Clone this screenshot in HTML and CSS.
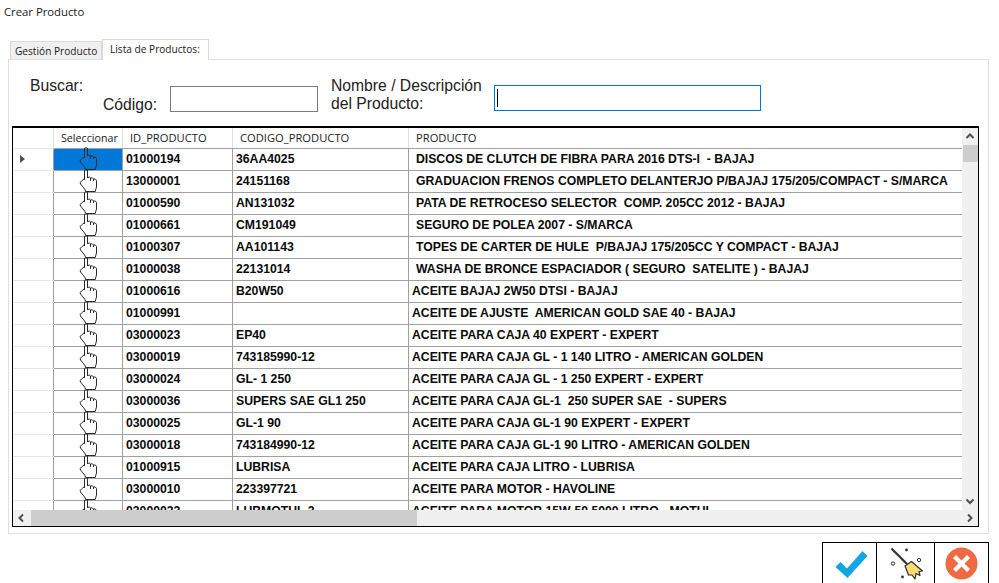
FILE: index.html
```html
<!DOCTYPE html>
<html lang="es">
<head>
<meta charset="utf-8">
<title>Crear Producto</title>
<link rel="stylesheet" href="styles.css">
</head>
<body>
<svg class="defs" width="0" height="0" aria-hidden="true">
  <symbol id="hand" viewBox="0 0 19 24">
    <path d="M5.5 11V1.2Q7 .2 8.5 1.2V9M8.5 8.6Q10.500 7.200 11.500 9V12M11.500 9Q13.500 8 14.500 10V12M14.500 10Q16.500 9.200 17.500 11.500V18Q16.800 20 16.300 22.500H6.800Q6 20 4 18L1.500 15Q.5 13 2.500 12L5.500 9.500" fill="none" stroke="#2b2b2b" stroke-width="1"/>
  </symbol>
</svg>
<div class="window">
  <div class="title">Crear Producto</div>
  <div class="tabs">
    <div class="tab">Gestión Producto</div>
    <div class="tab tab-active">Lista de Productos:</div>
  </div>
  <div class="panel">
    <div class="search">
      <div class="search-code">
        <div class="search-title">Buscar:</div>
        <div class="search-code-label">Código:</div>
      </div>
      <div class="input input-code"></div>
      <div class="search-name-label">Nombre / Descripción<br>del Producto:</div>
      <div class="input input-name"><span class="caret"></span></div>
    </div>
    <div class="grid">
      <div class="grid-main">
        <div class="grid-view">
          <div class="row row-head">
            <div class="c c0"></div><div class="c c1">Seleccionar</div><div class="c c2">ID_PRODUCTO</div><div class="c c3">CODIGO_PRODUCTO</div><div class="c c4 in">PRODUCTO</div>
          </div>
          <div class="row"><div class="c c0"><span class="arrow"></span></div><div class="c c1 sel"><svg class="hand"><use href="#hand"/></svg></div><div class="c c2">01000194</div><div class="c c3">36AA4025</div><div class="c c4 in">DISCOS DE CLUTCH DE FIBRA PARA 2016 DTS-I  - BAJAJ</div></div>
          <div class="row"><div class="c c0"></div><div class="c c1"><svg class="hand"><use href="#hand"/></svg></div><div class="c c2">13000001</div><div class="c c3">24151168</div><div class="c c4 in">GRADUACION FRENOS COMPLETO DELANTERJO P/BAJAJ 175/205/COMPACT - S/MARCA</div></div>
          <div class="row"><div class="c c0"></div><div class="c c1"><svg class="hand"><use href="#hand"/></svg></div><div class="c c2">01000590</div><div class="c c3">AN131032</div><div class="c c4 in">PATA DE RETROCESO SELECTOR  COMP. 205CC 2012 - BAJAJ</div></div>
          <div class="row"><div class="c c0"></div><div class="c c1"><svg class="hand"><use href="#hand"/></svg></div><div class="c c2">01000661</div><div class="c c3">CM191049</div><div class="c c4 in">SEGURO DE POLEA 2007 - S/MARCA</div></div>
          <div class="row"><div class="c c0"></div><div class="c c1"><svg class="hand"><use href="#hand"/></svg></div><div class="c c2">01000307</div><div class="c c3">AA101143</div><div class="c c4 in">TOPES DE CARTER DE HULE  P/BAJAJ 175/205CC Y COMPACT - BAJAJ</div></div>
          <div class="row"><div class="c c0"></div><div class="c c1"><svg class="hand"><use href="#hand"/></svg></div><div class="c c2">01000038</div><div class="c c3">22131014</div><div class="c c4 in">WASHA DE BRONCE ESPACIADOR ( SEGURO  SATELITE ) - BAJAJ</div></div>
          <div class="row"><div class="c c0"></div><div class="c c1"><svg class="hand"><use href="#hand"/></svg></div><div class="c c2">01000616</div><div class="c c3">B20W50</div><div class="c c4">ACEITE BAJAJ 2W50 DTSI - BAJAJ</div></div>
          <div class="row"><div class="c c0"></div><div class="c c1"><svg class="hand"><use href="#hand"/></svg></div><div class="c c2">01000991</div><div class="c c3"></div><div class="c c4">ACEITE DE AJUSTE  AMERICAN GOLD SAE 40 - BAJAJ</div></div>
          <div class="row"><div class="c c0"></div><div class="c c1"><svg class="hand"><use href="#hand"/></svg></div><div class="c c2">03000023</div><div class="c c3">EP40</div><div class="c c4">ACEITE PARA CAJA 40 EXPERT - EXPERT</div></div>
          <div class="row"><div class="c c0"></div><div class="c c1"><svg class="hand"><use href="#hand"/></svg></div><div class="c c2">03000019</div><div class="c c3">743185990-12</div><div class="c c4">ACEITE PARA CAJA GL - 1 140 LITRO - AMERICAN GOLDEN</div></div>
          <div class="row"><div class="c c0"></div><div class="c c1"><svg class="hand"><use href="#hand"/></svg></div><div class="c c2">03000024</div><div class="c c3">GL- 1 250</div><div class="c c4">ACEITE PARA CAJA GL - 1 250 EXPERT - EXPERT</div></div>
          <div class="row"><div class="c c0"></div><div class="c c1"><svg class="hand"><use href="#hand"/></svg></div><div class="c c2">03000036</div><div class="c c3">SUPERS SAE GL1 250</div><div class="c c4">ACEITE PARA CAJA GL-1  250 SUPER SAE  - SUPERS</div></div>
          <div class="row"><div class="c c0"></div><div class="c c1"><svg class="hand"><use href="#hand"/></svg></div><div class="c c2">03000025</div><div class="c c3">GL-1 90</div><div class="c c4">ACEITE PARA CAJA GL-1 90 EXPERT - EXPERT</div></div>
          <div class="row"><div class="c c0"></div><div class="c c1"><svg class="hand"><use href="#hand"/></svg></div><div class="c c2">03000018</div><div class="c c3">743184990-12</div><div class="c c4">ACEITE PARA CAJA GL-1 90 LITRO - AMERICAN GOLDEN</div></div>
          <div class="row"><div class="c c0"></div><div class="c c1"><svg class="hand"><use href="#hand"/></svg></div><div class="c c2">01000915</div><div class="c c3">LUBRISA</div><div class="c c4">ACEITE PARA CAJA LITRO - LUBRISA</div></div>
          <div class="row"><div class="c c0"></div><div class="c c1"><svg class="hand"><use href="#hand"/></svg></div><div class="c c2">03000010</div><div class="c c3">223397721</div><div class="c c4">ACEITE PARA MOTOR - HAVOLINE</div></div>
          <div class="row"><div class="c c0"></div><div class="c c1"><svg class="hand"><use href="#hand"/></svg></div><div class="c c2">03000022</div><div class="c c3">LUBMOTUL 2</div><div class="c c4">ACEITE PARA MOTOR 15W-50 5000 LITRO - MOTUL</div></div>
        </div>
        <div class="vbar">
          <svg class="chev" width="16" height="17" viewBox="0 0 16 17"><path d="M4.500 10 8 6.500 11.500 10" fill="none" stroke="#505050" stroke-width="2"/></svg>
          <div class="vthumb"></div>
          <div class="spacer"></div>
          <svg class="chev" width="16" height="17" viewBox="0 0 16 17"><path d="M4.500 6.500 8 10 11.500 6.500" fill="none" stroke="#505050" stroke-width="2"/></svg>
        </div>
      </div>
      <div class="hbar">
        <svg class="chev" width="17" height="16" viewBox="0 0 17 16"><path d="M10 4.500 6.500 8 10 11.500" fill="none" stroke="#505050" stroke-width="2"/></svg>
        <div class="hthumb"></div>
        <div class="spacer"></div>
        <svg class="chev" width="17" height="16" viewBox="0 0 17 16"><path d="M7 4.500 10.500 8 7 11.500" fill="none" stroke="#505050" stroke-width="2"/></svg>
      </div>
    </div>
  </div>
  <div class="actions">
    <div class="action action-ok">
      <svg width="33" height="29" viewBox="0 0 33 29"><path d="M.5 17 5.500 12 12 18.500 27.500 1 32.500 6 12.500 28Z" fill="#12a5e4"/></svg>
    </div>
    <div class="action action-clear">
      <svg width="36" height="36" viewBox="0 0 36 36">
        <path d="M3.500 1.500 19 17" stroke="#333" stroke-width="2.200" fill="none"/>
        <path d="M17 19 23.500 14.500 34.500 24 31 24.500 32 28.500 28 26.500 27 32 24 28 20.500 28Z" fill="#fddc73" stroke="#2d2d2d" stroke-width="1.200" stroke-linejoin="round"/>
        <circle cx="18.500" cy="3" r="1.400" fill="#333"/>
        <circle cx="5" cy="16.500" r="1.700" fill="none" stroke="#333"/>
        <circle cx="31" cy="13" r="1.700" fill="none" stroke="#333"/>
        <circle cx="14.500" cy="30" r="1.400" fill="#333"/>
      </svg>
    </div>
    <div class="action action-close">
      <svg width="33" height="33" viewBox="0 0 33 33">
        <circle cx="16.500" cy="16.500" r="16" fill="#ef6a42"/>
        <path d="M11 8 16.500 13.500 22 8 25 11 19.500 16.500 25 22 22 25 16.500 19.500 11 25 8 22 13.500 16.500 8 11Z" fill="#fff"/>
      </svg>
    </div>
  </div>
</div>
</body>
</html>
```
FILE: styles.css
```css
* { box-sizing: border-box; }
html, body { margin: 0; padding: 0; background: #fff; overflow: hidden; }
.defs { display: block; height: 0; }
.window {
  width: 999px;
  height: 583px;
  overflow: hidden;
  color: #1a1a1a;
  font-family: "Open Sans", "Liberation Sans", sans-serif;
}
.title {
  height: 39px;
  padding: 4px 0 0 4px;
  font-size: 11.300px;
  line-height: 16px;
}
.tabs {
  display: flex;
  align-items: flex-end;
  height: 20px;
  margin-left: 10px;
  position: relative;
  z-index: 1;
}
.tab {
  height: 18px;
  width: 92px;
  padding-left: 4px;
  font-size: 10.150px;
  line-height: 18px;
  background: #f0f0f0;
  border: 1px solid #d9d9d9;
  border-bottom: 0;
  white-space: nowrap;
}
.tab-active {
  height: 21px;
  width: 107px;
  margin-bottom: -1px;
  padding: 1px 0 0 7px;
  background: #fff;
  line-height: 16px;
}
.panel {
  width: 981px;
  height: 475px;
  margin-left: 8px;
  padding: 0 3px;
  border: 1px solid #dfdfdf;
  background: #fff;
}
.search {
  display: flex;
  align-items: flex-start;
  height: 66px;
  font-family: "Liberation Sans", Arial, sans-serif;
  font-size: 15.700px;
  line-height: 17px;
  color: #222;
}
.search-code { width: 158px; padding: 17px 0 0 18px; }
.search-code-label { margin: 2px 0 0 73px; }
.input { background: #fff; border: 1px solid #7a7a7a; }
.input-code { width: 148px; height: 26px; margin-top: 26px; }
.search-name-label { width: 163px; margin: 17px 0 0 13px; line-height: 18px; }
.input-name {
  width: 267px;
  height: 26px;
  margin-top: 25px;
  border-color: #0078d7;
  padding: 3px 0 0 2px;
}
.caret { display: block; width: 1px; height: 18px; background: #000; }
.grid {
  width: 967px;
  height: 401px;
  border: 1px solid #000;
  border-top-width: 2px;
  display: flex;
  flex-direction: column;
  background: #fff;
}
.grid-main { display: flex; height: 382px; }
.grid-view { width: 949px; overflow: hidden; }
.row {
  display: flex;
  height: 22px;
  border-bottom: 1px solid #a0a0a0;
  font-family: "Liberation Sans", Arial, sans-serif;
  font-weight: 700;
  font-size: 12.220px;
  line-height: 21px;
  color: #0a0a0a;
  white-space: pre;
}
.row-head {
  height: 21px;
  font-family: "Open Sans", "Liberation Sans", sans-serif;
  font-weight: 400;
  font-size: 11.200px;
  line-height: 20px;
  color: #222;
}
.c { height: 100%; padding-left: 3px; border-right: 1px solid #a0a0a0; position: relative; overflow: visible; }
.row-head .c { border-right-color: #e0e0e0; padding-left: 7px; }
.c0 { width: 41px; border-bottom: 0; box-shadow: 0 1px 0 #e6e6e6; }
.row-head .c1 { padding-left: 7px; font-size: 10.700px; }
.c1 { width: 69px; }
.c2 { width: 110px; }
.c3 { width: 176px; }
.c4 { width: 553px; border-right: 0; }
.c4.in { padding-left: 7px; }
.row-head .c4 { padding-left: 7px; }
.sel { background: #0078d7; }
.hand {
  position: absolute;
  left: 25px;
  top: -2px;
  width: 19px;
  height: 24px;
  overflow: visible;
}
.arrow {
  position: absolute;
  left: 7px;
  top: 6px;
  width: 0;
  height: 0;
  border-left: 5px solid #505050;
  border-top: 4.500px solid transparent;
  border-bottom: 4.500px solid transparent;
}
.vbar {
  width: 16px;
  height: 382px;
  display: flex;
  flex-direction: column;
  background: #f0f0f0;
  border-left: 0;
}
.chev { display: block; flex: none; }
.vthumb { height: 17px; background: #cdcdcd; margin-left: 1px; }
.spacer { flex: 1; }
.hbar { height: 16px; display: flex; background: #f0f0f0; }
.hthumb { width: 386px; background: #cdcdcd; margin-left: 1px; }
.actions {
  display: flex;
  width: 167px;
  height: 43px;
  margin: 8px 0 0 822px;
  border: 1px solid #000;
  border-bottom: 0;
}
.action { display: flex; justify-content: center; padding-top: 5px; height: 42px; border-right: 1px solid #000; }
.action-ok { width: 54px; padding: 7px 0 0 3px; }
.action-clear { width: 58px; padding-top: 4px; }
.action-close { flex: 1; border-right: 0; padding-top: 4px; }
```
